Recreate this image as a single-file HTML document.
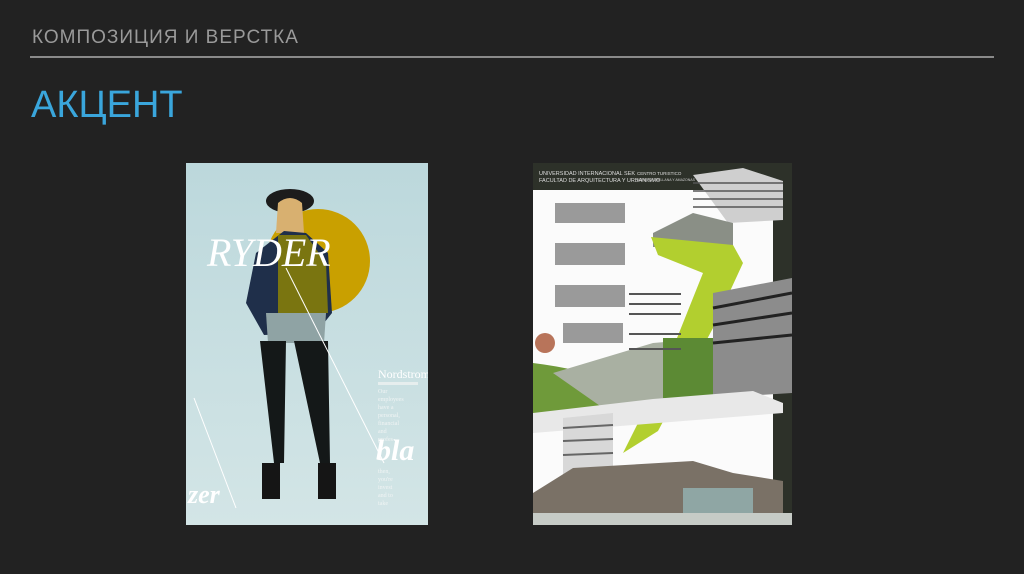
<!DOCTYPE html>
<html><head><meta charset="utf-8"><style>
html,body{margin:0;padding:0;background:#222222;width:1024px;height:574px;overflow:hidden}
.h{position:absolute;left:32px;top:27px;font:19px "Liberation Sans",sans-serif;color:#9a9a9a;letter-spacing:1px}
.line{position:absolute;left:30px;top:56px;width:964px;height:2px;background:#8a8a8a}
.t{position:absolute;left:31px;top:84px;font:38px "Liberation Sans",sans-serif;color:#3aa6dc}
svg{position:absolute}
</style></head><body>
<div class="h">КОМПОЗИЦИЯ И ВЕРСТКА</div>
<div class="line"></div>
<div class="t">АКЦЕНТ</div>

<svg style="left:186px;top:163px" width="242" height="362" viewBox="0 0 242 362">
<defs><linearGradient id="bg" x1="0" y1="0" x2="0" y2="1"><stop offset="0" stop-color="#bcd8dc"/><stop offset="1" stop-color="#d3e5e6"/></linearGradient></defs>
<rect width="242" height="362" fill="url(#bg)"/>
<circle cx="132" cy="98" r="52" fill="#c9a000"/>
<ellipse cx="104" cy="38" rx="24" ry="12" fill="#1c1c1c"/>
<path d="M92 40 Q104 30 116 40 L118 70 L90 70Z" fill="#d8b070"/>
<path d="M70 90 L98 68 L120 70 L142 90 L146 150 L130 170 L78 172 L60 140Z" fill="#1f2f4a"/>
<path d="M92 72 L120 72 L140 100 L142 150 L92 150Z" fill="#7a7510"/>
<path d="M80 150 L140 150 L138 180 L82 180Z" fill="#8fa3a4"/>
<path d="M74 178 L100 178 L98 300 L88 300Z M108 178 L142 178 L144 300 L134 300Z" fill="#141818"/>
<rect x="76" y="300" width="18" height="36" fill="#151515"/><rect x="132" y="300" width="18" height="36" fill="#151515"/>
<line x1="100" y1="105" x2="198" y2="300" stroke="#fff" stroke-width="1"/>
<line x1="8" y1="235" x2="50" y2="345" stroke="#fff" stroke-width="1"/>
<text x="21" y="103" font-family="Liberation Serif,serif" font-style="italic" font-size="40" fill="#fff">RYDER</text>
<text x="192" y="215" font-family="Liberation Serif,serif" font-size="12" fill="#fff">Nordstrom</text>
<rect x="192" y="219" width="40" height="3" fill="#e6eeee"/>
<g font-family="Liberation Serif,serif" font-size="6" fill="#f0f4f4"><text x="192" y="230">Our</text><text x="192" y="238">employees</text><text x="192" y="246">have a</text><text x="192" y="254">personal,</text><text x="192" y="262">financial</text><text x="192" y="270">and</text><text x="192" y="278">profes-</text><text x="192" y="310">then,</text><text x="192" y="318">you're</text><text x="192" y="326">invest</text><text x="192" y="334">and to</text><text x="192" y="342">take</text></g>
<text x="190" y="297" font-family="Liberation Serif,serif" font-style="italic" font-weight="bold" font-size="30" fill="#fff">bla</text>
<text x="2" y="340" font-family="Liberation Serif,serif" font-style="italic" font-weight="bold" font-size="26" fill="#fff">zer</text>
</svg>

<svg style="left:533px;top:163px" width="259" height="362" viewBox="0 0 259 362">
<rect width="259" height="362" fill="#2d3129"/>
<rect x="0" y="27" width="240" height="335" fill="#fbfbfb"/>
<text x="6" y="12" font-family="Liberation Sans,sans-serif" font-size="5.5" fill="#ddd">UNIVERSIDAD INTERNACIONAL SEK</text>
<text x="6" y="19" font-family="Liberation Sans,sans-serif" font-size="5.5" fill="#ddd">FACULTAD DE ARQUITECTURA Y URBANISMO</text>
<text x="104" y="12" font-family="Liberation Sans,sans-serif" font-size="4.5" fill="#ddd">CENTRO TURISTICO</text>
<text x="104" y="18" font-family="Liberation Sans,sans-serif" font-size="3.5" fill="#ccc">AVENIDA ORELLANA Y AMAZONAS</text>
<path d="M160 12 L210 5 L250 18 L250 57 L195 60Z" fill="#cfcfcf"/>
<g stroke="#555" stroke-width="1.4"><line x1="160" y1="20" x2="250" y2="20"/><line x1="160" y1="28" x2="250" y2="28"/><line x1="160" y1="36" x2="250" y2="36"/><line x1="160" y1="44" x2="250" y2="44"/></g>
<path d="M120 70 L160 50 L200 60 L200 84 L120 84Z" fill="#8a8f86"/>
<path d="M118 74 L200 82 L210 100 L180 165 L125 268 L90 290 L130 210 L170 110 L125 92Z" fill="#b2cf2f"/>
<path d="M0 200 Q80 210 120 240 L0 260Z" fill="#6f9a3a"/>
<path d="M20 210 L120 180 L180 175 L200 250 L70 245Z" fill="#a9b0a2"/>
<rect x="130" y="175" width="65" height="60" fill="#5c8a34"/>
<path d="M180 130 L259 115 L259 230 L180 235Z" fill="#8c8c8c"/>
<g stroke="#222" stroke-width="3"><line x1="180" y1="145" x2="259" y2="130"/><line x1="180" y1="162" x2="259" y2="150"/><line x1="180" y1="180" x2="259" y2="172"/></g>
<path d="M0 250 L120 236 L220 228 L250 240 L250 250 L0 270Z" fill="#e8e8e8"/>
<g fill="#9a9a9a"><rect x="22" y="40" width="70" height="20"/><rect x="22" y="80" width="70" height="22"/><rect x="22" y="122" width="70" height="22"/><rect x="30" y="160" width="60" height="20"/></g>
<g fill="#555"><rect x="96" y="130" width="52" height="2"/><rect x="96" y="140" width="52" height="2"/><rect x="96" y="150" width="52" height="2"/><rect x="96" y="170" width="52" height="2"/><rect x="96" y="185" width="52" height="2"/></g>
<circle cx="12" cy="180" r="10" fill="#b8745a"/>
<path d="M30 255 L80 250 L80 330 L30 330Z" fill="#d8d8d8"/>
<g stroke="#666" stroke-width="2"><line x1="30" y1="265" x2="80" y2="262"/><line x1="30" y1="278" x2="80" y2="276"/><line x1="30" y1="292" x2="80" y2="290"/></g>
<path d="M40 305 L160 298 L200 310 L250 318 L250 355 L0 355 L0 330Z" fill="#7a7166"/>
<rect x="150" y="325" width="70" height="25" fill="#8fa6a4"/>
<rect x="0" y="350" width="259" height="12" fill="#c6cbc6"/>
</svg>
</body></html>
